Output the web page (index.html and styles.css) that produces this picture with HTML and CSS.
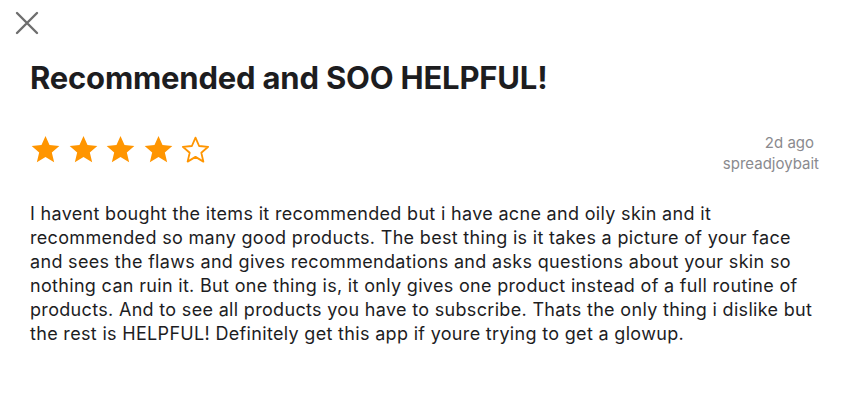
FILE: index.html
```html
<!DOCTYPE html>
<html>
<head>
<meta charset="utf-8">
<link rel="stylesheet" href="styles.css">
</head>
<body>
<div class="page">
  <button class="close" aria-label="Close">
    <svg width="26" height="26" viewBox="0 0 26 26"><path d="M3 3 L23 23 M23 3 L3 23" stroke="#6e6e6e" stroke-width="2.4" stroke-linecap="round" fill="none"/></svg>
  </button>
  <h1 class="title">Recommended and SOO HELPFUL!</h1>
  <div class="meta-row">
    <div class="stars">
      <svg class="star" viewBox="0 0 24 24"><path d="M12 1.6l3.1 7 7.6.7-5.8 5 1.8 7.5L12 17.8l-6.7 4 1.8-7.5-5.8-5 7.6-.7z" fill="#ff9500"/></svg>
      <svg class="star" viewBox="0 0 24 24"><path d="M12 1.6l3.1 7 7.6.7-5.8 5 1.8 7.5L12 17.8l-6.7 4 1.8-7.5-5.8-5 7.6-.7z" fill="#ff9500"/></svg>
      <svg class="star" viewBox="0 0 24 24"><path d="M12 1.6l3.1 7 7.6.7-5.8 5 1.8 7.5L12 17.8l-6.7 4 1.8-7.5-5.8-5 7.6-.7z" fill="#ff9500"/></svg>
      <svg class="star" viewBox="0 0 24 24"><path d="M12 1.6l3.1 7 7.6.7-5.8 5 1.8 7.5L12 17.8l-6.7 4 1.8-7.5-5.8-5 7.6-.7z" fill="#ff9500"/></svg>
      <svg class="star" viewBox="0 0 24 24"><path d="M12 2.8l2.8 6.5 7 .6-5.3 4.6 1.6 6.9L12 17.7l-6.1 3.7 1.6-6.9-5.3-4.6 7-.6z" fill="none" stroke="#ff9500" stroke-width="1.4" stroke-linejoin="round"/></svg>
    </div>
    <div class="info">
      <div class="date">2d ago</div>
      <div class="author">spreadjoybait</div>
    </div>
  </div>
  <p class="body">I havent bought the items it recommended but i have acne and oily skin and it recommended so many good products. The best thing is it takes a picture of your face and sees the flaws and gives recommendations and asks questions about your skin so nothing can ruin it. But one thing is, it only gives one product instead of a full routine of products. And to see all products you have to subscribe. Thats the only thing i dislike but the rest is HELPFUL! Definitely get this app if youre trying to get a glowup.</p>
</div>
</body>
</html>
```
FILE: styles.css
```css
html, body {
  margin: 0;
  padding: 0;
  background: #ffffff;
}
body {
  font-family: Inter, "Noto Sans", sans-serif;
  color: #1d1d1f;
}
.page {
  width: 846px;
  height: 412px;
  box-sizing: border-box;
  padding: 0 27px 0 30px;
  display: flex;
  flex-direction: column;
}
.close {
  margin: 10px 0 0 -16px;
  padding: 0;
  border: 0;
  background: none;
  width: 26px;
  height: 26px;
  display: flex;
}
.title {
  margin: 24px 0 0;
  font-size: 31px;
  font-weight: 700;
  letter-spacing: -0.2px;
  line-height: 36px;
  color: #1d1d1f;
}
.meta-row {
  margin-top: 26px;
  display: flex;
  justify-content: space-between;
  align-items: flex-start;
}
.stars {
  display: flex;
  gap: 6.5px;
  margin-top: 12px;
}
.star {
  width: 31px;
  height: 31px;
  display: block;
}
.info {
  margin-top: 10px;
  margin-right: 2px;
  text-align: right;
  font-size: 15px;
  line-height: 21px;
  color: #8a8a8e;
}
.date {
  margin-right: 3px;
}
.author {
  margin-right: -2px;
}
.body {
  margin: 28px 0 0;
  font-size: 18px;
  letter-spacing: 0.32px;
  line-height: 24px;
  color: #1d1d1f;
}
```
